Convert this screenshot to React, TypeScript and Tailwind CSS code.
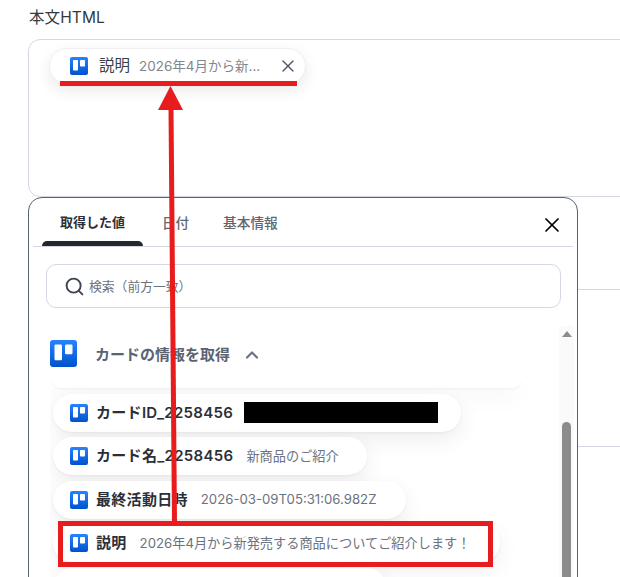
import React from "react";
import { Search, X, ChevronUp } from "lucide-react";

function TrelloIcon(props: { size: number }) {
  return (
    <svg width={props.size} height={props.size} viewBox="0 0 18 18" className="shrink-0">
      <defs>
        <linearGradient id="trello" x1="0" y1="0" x2="0" y2="1">
          <stop offset="0" stopColor="#2684ff" />
          <stop offset="1" stopColor="#0052cc" />
        </linearGradient>
      </defs>
      <rect width="18" height="18" rx="2" fill="url(#trello)" />
      <rect x="3" y="3" width="5" height="10.5" rx="0.8" fill="#fff" />
      <rect x="10" y="3" width="5" height="6.5" rx="0.8" fill="#fff" />
    </svg>
  );
}

function ValuePill(props: { name?: string; value?: string; redacted?: boolean; width: string }) {
  return (
    <div
      className={`flex h-[38px] shrink-0 items-center rounded-full bg-white pl-[17px] shadow-[0_1px_3px_rgba(0,0,0,0.05),0_8px_22px_rgba(0,0,0,0.07)] ${props.width}`}
    >
      {props.name && (
        <>
          <TrelloIcon size={18} />
          <span className="mt-[1px] ml-2 text-[15px] font-semibold tracking-[0.3px] whitespace-nowrap text-[#2b3038]">
            {props.name}
          </span>
        </>
      )}
      {props.value && (
        <span className="mt-[1px] ml-[13px] text-[13.2px] whitespace-nowrap text-[#6b7280]">{props.value}</span>
      )}
      {props.redacted && <div className="-mt-[1px] ml-[11px] h-[21px] w-[194px] bg-black" />}
    </div>
  );
}

export default function App() {
  return (
    <div
      className="relative h-[577px] w-[620px] overflow-hidden bg-white"
      style={{ fontFamily: '"Inter", "Noto Sans CJK JP", sans-serif' }}
    >
      <div className="pl-[28px]">
        <div className="flex h-[39px] items-start pt-[8px] pl-[1px] text-[15.5px] leading-[20px] tracking-[0.1px] text-[#333940]">本文HTML</div>
        <div className="h-[158px] w-[640px] rounded-l-[12px] border border-[#d3d8e2] pt-[8px] pl-[20px]">
          <div className="flex h-[36px] w-[257px] items-center rounded-full border border-[#f0f0f3] bg-white pl-[20px] shadow-[0_6px_16px_rgba(0,0,0,0.09)]">
            <TrelloIcon size={18} />
            <span className="ml-[11px] text-[15.5px] text-[#3a4048]">説明</span>
            <span className="ml-[9px] w-[127px] text-[13.5px] whitespace-nowrap text-[#82868d]">2026年4月から新...</span>
            <X size={20} strokeWidth={1.6} className="ml-[12px] text-[#4b5563]" />
          </div>
        </div>
        <div className="h-[93px] border-b border-[#d3d8e2]" />
        <div className="h-[157px] border-b border-[#d3d8e2]" />
      </div>

      {/* popup over the form */}
      <div className="absolute top-[197px] left-[28px] h-[420px] w-[550px] rounded-[14px] border border-[#5a6270] bg-white">
        <div className="mx-[4px] flex h-[49px] items-stretch border-b border-[#d3d8e2] pl-[9px]">
          <div className="relative flex w-[101px] items-center justify-center pt-[2px] text-[13px] font-semibold text-[#2b3038]">
            取得した値
            <div className="absolute right-0 bottom-0 left-0 h-[5px] rounded-t-[5px] bg-[#22282e]" />
          </div>
          <div className="ml-[19px] flex items-center pt-[2px] text-[13.5px] font-medium text-[#5f6670]">日付</div>
          <div className="ml-[34px] flex items-center pt-[2px] text-[13.7px] font-medium text-[#5f6670]">基本情報</div>
          <X size={24} strokeWidth={1.7} className="mt-[15px] ml-auto mr-[9px] text-black" />
        </div>

        <div className="mx-[17px] mt-[17px] flex h-[44px] w-[515px] items-center rounded-[10px] border border-[#d3d8e2] pl-[17px]">
          <Search size={21} strokeWidth={2.2} className="text-[#3f4650]" />
          <span className="mt-[1px] ml-[4px] text-[12.8px] text-[#6b7280]">検索（前方一致）</span>
        </div>

        <div className="mt-[18px] flex h-[360px]">
          <div className="w-[530px] min-w-0 pl-[21px]">
            <div className="flex h-[55px] items-center">
              <TrelloIcon size={27} />
              <span className="mt-[3px] ml-[18px] text-[15px] font-semibold text-[#5b6270]">カードの情報を取得</span>
              <ChevronUp size={20} strokeWidth={2.6} className="mt-[3px] ml-[12px] text-[#6b7280]" />
            </div>
            <div className="flex flex-col gap-[5.5px] overflow-hidden pr-[20px] pb-[20px] pl-[3px]">
              <div className="h-[7px] w-[467px] rounded-b-[14px] bg-white shadow-[0_1px_3px_rgba(0,0,0,0.05),0_8px_22px_rgba(0,0,0,0.07)]" />
              <ValuePill name="カードID_2258456" redacted width="w-[408px]" />
              <ValuePill name="カード名_2258456" value="新商品のご紹介" width="w-[314px]" />
              <ValuePill name="最終活動日時" value="2026-03-09T05:31:06.982Z" width="w-[353px]" />
              <ValuePill name="説明" value="2026年4月から新発売する商品についてご紹介します！" width="w-[447px]" />
              <ValuePill width="w-[333px]" />
            </div>
          </div>
          <div className="flex w-[15px] flex-col items-center bg-[#fafafa] pt-[5px]">
            <div className="h-0 w-0 border-x-[5px] border-b-[6px] border-x-transparent border-b-[#8c8c8c]" />
            <div className="mt-[85px] h-[200px] w-[9px] rounded-t-full bg-[#8c8c8c]" />
          </div>
        </div>
      </div>

      {/* red annotations */}
      <div className="absolute top-[81px] left-[60px] h-[5px] w-[237px] bg-[#e81c1c]" />
      <div className="absolute top-[521px] left-[58px] h-[46px] w-[435px] border-[5px] border-[#e81c1c]" />
      <svg className="absolute top-0 left-0" width="620" height="577" viewBox="0 0 620 577">
        <line x1="171" y1="108" x2="174.5" y2="522" stroke="#e81c1c" strokeWidth="5" />
        <polygon points="170.5,86 158,110 183,110" fill="#e81c1c" />
      </svg>
    </div>
  );
}
